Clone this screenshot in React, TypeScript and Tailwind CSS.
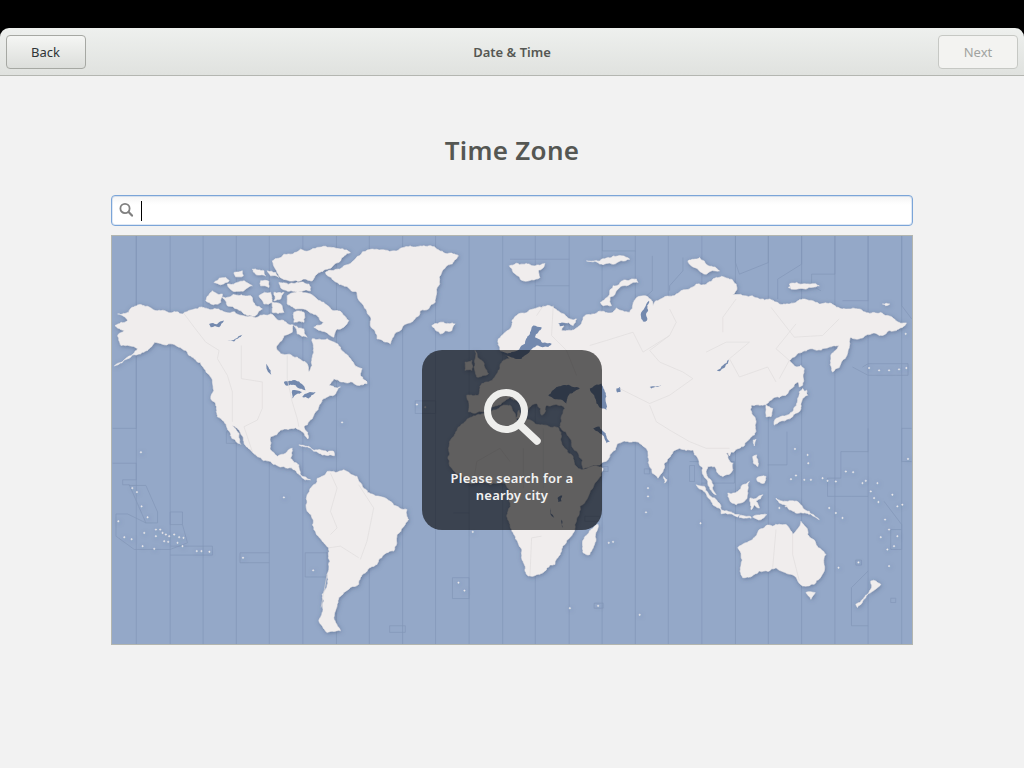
import { useMemo } from "react";

const LAND_U: string[] = [
  // Eurasia
  "1170,345 1165,310 1200,280 1225,235 1270,220 1320,210 1350,230 1400,250 1390,270 1360,260 1355,285 1385,285 1410,270 1420,245 1450,235 1510,230 1520,217 1560,230 1570,205 1590,182 1612,182 1630,210 1640,195 1670,182 1700,175 1760,145 1820,125 1880,145 1880,165 1860,185 1950,190 2010,205 2080,190 2130,205 2200,220 2260,225 2330,240 2392,262 2370,280 2340,285 2320,300 2250,310 2225,305 2200,375 2170,410 2165,365 2190,330 2160,335 2110,340 2040,375 2080,400 2070,440 2030,480 1990,490 1960,510 1925,510 1940,560 1935,600 1890,640 1850,655 1870,685 1870,705 1840,725 1825,715 1815,695 1795,695 1790,715 1810,765 1820,780 1795,740 1780,700 1765,670 1750,645 1710,640 1690,650 1645,730 1615,650 1580,620 1525,625 1500,660 1470,690 1420,702 1380,610 1350,575 1355,560 1365,520 1310,510 1295,540 1280,505 1250,530 1245,515 1200,485 1180,500 1140,515 1120,530 1075,530 1070,480 1105,480 1115,445 1135,440 1165,405 1180,375 1200,370 1180,350",
  // Africa
  "1015,640 1030,605 1065,560 1100,540 1140,530 1200,510 1220,555 1230,560 1300,570 1345,578 1365,640 1400,695 1415,705 1480,702 1460,740 1410,815 1400,855 1395,885 1365,930 1335,990 1290,1020 1255,1025 1235,960 1205,885 1190,845 1200,785 1185,745 1140,750 1070,745 1020,695",
];

const LAND_L: string[] = [
  // North America
  "20,235 80,208 110,212 150,225 215,235 245,222 300,222 345,230 395,240 440,245 480,235 520,255 548,268 545,290 520,300 497,335 510,355 560,365 590,385 595,410 605,390 610,350 605,310 650,310 690,335 715,365 755,400 750,420 770,445 740,450 700,440 670,430 655,450 690,455 670,480 640,490 625,515 610,540 580,575 592,612 575,590 555,578 510,585 480,605 478,640 500,665 525,655 545,640 540,670 565,690 570,720 600,735 585,735 560,715 520,695 480,680 440,665 420,645 400,620 365,570 390,628 350,580 320,545 300,490 305,440 280,400 250,370 225,345 180,325 130,320 110,345 50,370 10,392 50,365 80,340 30,330 20,300 40,285 12,270 50,255",
  // South America
  "590,780 600,760 650,710 700,705 740,725 790,780 840,800 890,825 895,855 860,900 850,950 800,990 750,1030 745,1050 700,1075 680,1110 670,1150 690,1190 650,1195 625,1160 635,1080 650,1020 655,940 610,885 590,830",
  // Greenland
  "645,110 700,90 800,40 900,30 980,40 1045,60 1000,100 985,150 975,200 930,225 880,270 840,325 800,310 780,270 760,210 740,170 680,140",
  // Iceland
  "965,270 1000,260 1035,265 1025,285 990,295",
  // Cuba, Hispaniola, Newfoundland
  "565,630 620,645 670,660 625,655", "640,655 670,650 672,662", "735,420 770,440 745,450",
];

const LAND_Z7: string[] = [
  "15,180 35,150 65,160 60,185 30,190",
  "65,170 130,165 150,165 165,195 185,205 165,225 130,220 110,205 80,195",
  "40,125 75,110 85,120 60,132", "80,130 110,125 130,120 155,135 130,150 95,150",
  "100,95 125,90 128,105 105,108", "155,85 190,90 195,105 165,100", "200,90 225,95 235,110 210,105",
  "180,120 205,122 205,140 180,135", "175,165 210,155 215,185 190,190",
  "235,125 290,125 325,130 330,150 270,150 240,140",
  "215,60 250,40 300,25 400,20 450,35 420,60 380,85 335,120 280,120 235,105 225,85",
  "220,155 250,155 240,175 220,180", "215,185 240,190 250,215 215,215",
  "260,165 285,155 330,160 370,185 400,210 445,240 430,260 410,265 400,290 360,270 340,260 370,245 350,225 310,205 285,205 260,190",
  "280,215 310,215 310,245 280,245", "280,255 310,265 320,290 290,280",
];

const LAND_Z8: string[] = [
  "88,45 130,40 195,38 175,60 180,80 130,90 100,65",
  "362,155 400,105 470,85 475,95 420,110 390,140 395,165 370,165",
  "320,30 360,30 400,15 450,25 400,40",
];

const LAND_Z9: string[] = [
  "145,190 175,185 210,155 205,180 195,215 170,225 150,210",
  "50,165 75,170 105,205 125,240 100,225",
  "125,240 180,255 175,262 125,252",
  "220,80 232,75 235,110 222,100", "232,145 260,140 255,160 235,155",
  "212,205 250,195 230,215 240,235 225,225 215,240",
  "222,30 230,28 225,48", "145,62 158,60 150,78",
  "180,258 215,262 215,266 180,264", "220,262 262,255 245,270",
];

const LAND_R: string[] = [
  "250,880 265,870 258,920 240,960 220,955 218,925",
  "795,570 800,550 850,530 865,490 880,470 892,465 880,490 875,520 830,555",
  "870,470 880,460 895,480 875,490", "875,390 885,400 880,450 870,455", "770,510 790,520 785,545 770,545",
  "685,940 730,915 750,885 790,875 830,870 850,900 875,860 895,900 950,960 945,1010 915,1050 880,1055 845,1020 800,1000 750,1010 700,1030 695,990",
  "890,1075 918,1075 905,1095",
  "1085,1040 1115,1050 1085,1075 1045,1120 1040,1110 1085,1065",
  "800,790 830,800 870,805 900,830 930,855 880,835 840,825 810,805",
  "462,725 472,735 465,745",
  "535,75 570,65 630,105 590,115 545,90", "840,145 930,150 890,160 845,160", "1120,205 1142,205 1130,210",
];

const LAND_Z4: string[] = [
  "195,30 215,60 235,100 200,110 195,70", "165,65 185,60 185,90 165,90",
  "318,235 327,210 335,235",
];

const SEA_U: string[] = [
  "1245,325 1270,270 1295,275 1275,305 1325,325 1315,335 1280,330 1260,345 1235,370 1215,370 1195,362 1172,350 1205,350",
  "1315,480 1340,455 1370,450 1410,460 1380,475 1370,505 1330,490",
  "1440,460 1475,445 1490,525 1460,505",
  "1450,580 1490,625 1500,620 1470,575",
  "1520,460 1530,455 1532,470 1522,472", "1620,455 1655,450 1625,460",
  "1822,405 1858,372 1855,385 1830,408",
  "1345,262 1375,262 1350,272", "1610,205 1618,195 1612,255 1600,258 1595,250",
  "1343,790 1357,782 1355,800 1345,802", "1320,820 1333,850 1326,845", "1355,855 1360,880 1356,875",
];

const SEA_L: string[] = [
  "295,265 340,255 325,275 300,275", "350,315 395,298 370,318",
  "468,385 480,405 482,418 470,405",
  "520,440 555,435 585,465 555,450 525,450", "545,465 575,470 545,490", "575,485 615,470 595,490",
];

const LAND_BORDERS: string[] = [
  "218,232 250,275 285,320 325,345 320,370 350,420 365,470 365,560",
  "392,330 392,430 455,440 455,520 440,555 400,575 425,650",
  "530,360 530,430 545,500 560,550 565,575",
  "660,715 680,760 660,830 680,880 660,900", "745,750 790,820 770,920 750,975",
  "655,940 690,935 745,970", "650,1020 632,1120",
  "1090,745 1100,680 1170,640 1200,680", "1240,760 1240,640", "1300,580 1300,760",
  "1280,240 1300,210", "1330,210 1325,300 1370,345 1400,420",
  "1440,330 1490,315 1570,290 1600,350 1680,300 1620,345 1650,380 1720,410 1750,430 1680,480 1620,505 1530,460",
  "1620,510 1640,560 1680,585 1740,620 1790,640 1860,640",
  "1680,300 1700,260 1680,220", "1840,290 1840,245 1880,190", "1790,350 1850,320 1920,320 1860,370 1890,425 1975,395 2000,440",
  "1985,215 2055,305 2140,300 2190,250", "2010,430 2040,375 2000,340 2060,265",
  "2000,885 1990,1000", "2050,900 2050,960 2070,1040",
  "1260,1025 1265,910 1295,905",
];

const ZONE_LINES: string[] = [
  "5,580 76,580 76,0", "5,685 76,685 76,735 35,735 35,750 55,750 105,865 140,865 140,832 105,752 55,752",
  "15,838 50,838 105,865", "15,838 15,905 70,945 178,945 230,925 215,870 215,832 178,832 178,870 215,870",
  "178,935 305,935 305,962 178,962", "388,955 388,985 476,985", "388,955 476,955",
  "584,955 650,955 650,1028 584,1028 584,955", "1027,1030 1077,1030 1077,1093 1027,1093 1027,1030",
  "838,1175 885,1175 885,1195 838,1195 838,1175", "347,590 380,590 380,625 347,625 347,590",
  "1276,150 1378,150", "1200,70 1378,70", "1478,0 1478,45 1577,45", "1628,60 1628,165 1578,210",
  "1720,65 1720,105 1680,150 1680,165", "1878,0 1878,80 1890,115 1977,80 1977,0", "2077,0 2077,85 2005,130 2005,190",
  "2177,0 2177,115 2107,115 2107,150 2135,165", "2277,0 2277,195 2200,195", "2378,0 2378,210 2408,250",
  "2260,395 2277,385 2397,385 2397,420 2277,420 2230,395", "2378,580 2408,580", "2378,580 2378,680 2408,680",
  "2195,650 2277,650 2277,580", "2195,650 2195,730 2155,730 2155,785 2227,785 2277,785",
  "2325,800 2378,870 2378,945 2345,945 2345,885 2378,885", "2277,1175 2227,1175 2227,1060 2277,1010",
  "2240,977 2257,977 2257,992 2240,992 2240,977", "2345,1092 2360,1092 2360,1105 2345,1105 2345,1092",
  "1453,1107 1480,1107 1480,1122 1453,1122 1453,1107", "1740,692 1755,692 1755,740 1740,740 1740,692",
  "1604,702 1620,702 1620,717 1604,717 1604,702", "1478,695 1495,695 1495,710 1478,710 1478,695",
  "2033,590 2033,690 1975,690", "1740,680 1875,680 1875,745 1775,745", "915,497 976,497 976,535 915,535 915,497",
  "1030,835 1077,835", "1425,845 1470,845 1470,860 1425,860 1425,845",
];

const VERTICALS = [76, 178, 277, 377, 476, 577, 678, 777, 877, 976, 1077, 1178, 1276, 1378, 1477, 1577, 1676, 1777, 1878, 1977, 2077, 2177, 2277, 2378];

const DOTS: number[][] = [
  [90,652],[64,760],[78,772],[92,815],[110,848],[22,860],[40,908],[62,914],[100,895],[95,935],[130,943],
  [135,885],[148,885],[155,895],[165,900],[175,905],[190,900],[205,908],[218,910],[135,905],[160,920],[172,922],[200,925],[215,935],[258,950],[272,950],[296,952],
  [397,970],[608,1008],[1045,1045],[1063,1069],[695,562],[920,508],[945,516],[520,788],[1088,892],
  [2057,642],[2095,660],[2097,685],[2060,722],[2045,733],[2085,735],[2105,735],[2140,730],[2155,738],[2180,740],[2210,710],[2232,712],[2260,745],[2270,738],[2305,745],
  [2285,770],[2295,790],[2308,802],[2350,780],[2365,815],[2380,810],[2328,855],[2315,908],[2340,885],[2365,905],[2335,945],[2355,935],[2340,995],[2248,984],[2188,1000],
  [1615,760],[1615,785],[1609,833],[1773,866],[1497,925],[1510,922],[1465,1115],[1380,1122],[1590,1142],[2397,672],
  [2280,398],[2310,405],[2340,405],[2370,402],[2392,398],[2040,155],[2390,295],[2010,820],[2030,815],[2160,820],[2180,835],[2200,850],
];

function roughen(points: string, seedStart: number): string {
  let seed = seedStart * 9301 + 49297;
  const rnd = () => {
    seed = (seed * 9301 + 49297) % 233280;
    return seed / 233280 - 0.5;
  };
  const pts = points.split(" ").map((p) => p.split(",").map(Number));
  const out: number[][] = [];
  const walk = (a: number[], b: number[], depth: number) => {
    const dx = b[0] - a[0];
    const dy = b[1] - a[1];
    const len = Math.hypot(dx, dy);
    if (depth === 0 || len < 7) {
      out.push(a);
      return;
    }
    const k = rnd() * 0.3;
    const m = [(a[0] + b[0]) / 2 - dy * k, (a[1] + b[1]) / 2 + dx * k];
    walk(a, m, depth - 1);
    walk(m, b, depth - 1);
  };
  pts.forEach((p, i) => walk(p, pts[(i + 1) % pts.length], 4));
  return out.map((p) => `${p[0].toFixed(1)},${p[1].toFixed(1)}`).join(" ");
}

function Pts({ items, seed = 1, ...rest }: { items: string[]; seed?: number } & React.SVGProps<SVGGElement>) {
  const list = useMemo(() => items.map((p, i) => roughen(p, seed + i)), [items, seed]);
  return (
    <g {...rest}>
      {list.map((p, i) => (
        <polygon key={i} points={p} />
      ))}
    </g>
  );
}

function WorldMap() {
  return (
    <svg viewBox="3 0 2406 1230" width="800" height="408" preserveAspectRatio="none" className="block">
      <defs>
        <filter id="landShadow" x="-5%" y="-5%" width="110%" height="110%">
          <feDropShadow dx="2" dy="3" stdDeviation="7" floodColor="#3c4d70" floodOpacity="0.5" />
        </filter>
      </defs>
      <rect x="0" y="0" width="2420" height="1230" fill="#94a8c8" />
      <g stroke="#8295b6" strokeWidth="2" fill="none">
        {VERTICALS.map((x) => (
          <line key={x} x1={x} y1={0} x2={x} y2={1230} />
        ))}
        {ZONE_LINES.map((p, i) => (
          <polyline key={i} points={p} />
        ))}
      </g>
      <g fill="#f0eded" stroke="#f0eded" strokeWidth="1.5" strokeLinejoin="round" filter="url(#landShadow)">
        <Pts items={LAND_U} seed={3} />
        <Pts items={LAND_L} seed={29} />
        <Pts items={LAND_Z7} seed={51} transform="translate(270 15)" />
        <Pts items={LAND_Z8} seed={77} transform="translate(1110 45)" />
        <Pts items={LAND_Z9} seed={91} transform="translate(1710 585)" />
        <Pts items={LAND_R} seed={113} transform="translate(1200 0)" />
        <Pts items={LAND_Z4} seed={139} transform="translate(900 315)" />
        {DOTS.map(([x, y], i) => (
          <circle key={i} cx={x} cy={y} r="2" />
        ))}
      </g>
      <g fill="#7389ae">
        <Pts items={SEA_U} seed={7} />
        <Pts items={SEA_L} seed={17} />
      </g>
      <g stroke="#e0dddd" strokeWidth="2" fill="none">
        {LAND_BORDERS.map((p, i) => (
          <polyline key={i} points={p} />
        ))}
      </g>
    </svg>
  );
}

export default function App() {
  return (
    <div className="w-[1024px] h-[768px] overflow-hidden bg-black flex flex-col font-['Noto_Sans',sans-serif]">
      <div className="h-[28px] shrink-0" />
      <header className="h-[48px] shrink-0 rounded-t-[9px] border-b border-[#b4b6b1] bg-linear-to-b from-[#eef0ee] to-[#e0e2df] flex items-center justify-between px-[6px] pt-[1px]">
        <button className="w-[80px] h-[34px] pt-[1px] pr-[1px] rounded-[4px] border border-[#a6a8a3] bg-linear-to-b from-[#f5f6f4] to-[#dcdedb] text-[13px] text-[#2e3436]">
          Back
        </button>
        <div className="pt-[1px] text-[13px] font-semibold text-[#555753]">Date &amp; Time</div>
        <button className="w-[80px] h-[34px] pt-[1px] rounded-[4px] border border-[#c6c8c4] bg-[#f3f3f1] text-[13px] text-[#a1a3a0]">
          Next
        </button>
      </header>
      <main className="flex-1 bg-[#f2f2f2] flex flex-col items-center">
        <h1 className="mt-[55px] h-[38px] leading-[38px] text-[26px] font-semibold tracking-[0.3px] text-[#555753]">Time Zone</h1>
        <div className="mt-[26px] w-[802px] h-[31px] rounded-[4px] border border-[#7ba5d8] bg-linear-to-b from-[#f4f4f4] to-white to-[30%] flex items-center shadow-[inset_0_0_0_1px_rgba(123,165,216,0.25)]">
          <svg width="16" height="16" viewBox="0 0 16 16" className="ml-[6px] mb-[2px]" fill="none" stroke="#808080">
            <circle cx="7" cy="6.5" r="4.6" strokeWidth="1.8" />
            <line x1="10.6" y1="10" x2="14" y2="13.6" strokeWidth="2.2" strokeLinecap="round" />
          </svg>
          <div className="ml-[7px] w-[1px] h-[20px] bg-black" />
        </div>
        <div className="relative mt-[9px] w-[802px] h-[410px] border border-[#b3b6b0]">
          <WorldMap />
          <div className="absolute left-[310px] top-[114px] w-[180px] h-[180px] rounded-[20px] bg-[rgba(0,0,0,0.6)] flex flex-col items-center">
            <svg width="60" height="62" viewBox="0 0 60 62" className="mt-[37px] ml-[1px]" fill="none" stroke="#eeeeec">
              <circle cx="23" cy="24" r="18.5" strokeWidth="7" />
              <line x1="38" y1="39" x2="54" y2="54" strokeWidth="7.5" strokeLinecap="round" />
            </svg>
            <p className="mt-[21px] w-[150px] text-center text-[13px] leading-[17px] font-semibold tracking-[0.2px] text-[#f2f2f2]">
              Please search for a nearby city
            </p>
          </div>
        </div>
      </main>
    </div>
  );
}
